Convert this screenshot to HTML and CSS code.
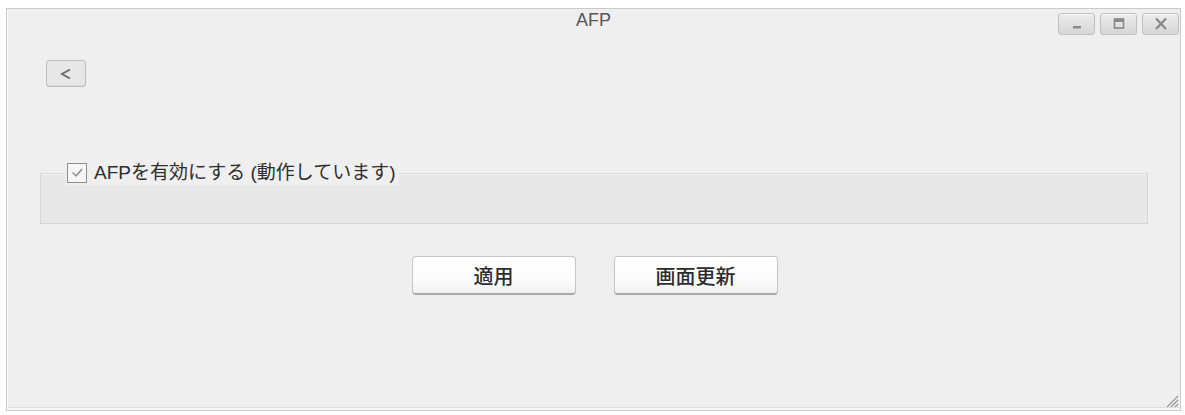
FILE: index.html
```html
<!DOCTYPE html>
<html lang="ja">
<head>
<meta charset="utf-8">
<title>AFP</title>
<link rel="stylesheet" href="styles.css">
</head>
<body>
<div class="window">
  <div class="titlebar">
    <div class="title">AFP</div>
    <div class="controls">
      <span class="ctl"><svg class="ico" width="16" height="14" viewBox="0 0 16 14"><rect x="4" y="9" width="8" height="2.5" fill="#888"/></svg></span>
      <span class="ctl"><svg class="ico" width="16" height="14" viewBox="0 0 16 14"><rect x="3.5" y="2" width="9" height="9" fill="none" stroke="#888" stroke-width="1.6"/><rect x="3.5" y="2" width="9" height="3" fill="#888"/></svg></span>
      <span class="ctl"><svg class="ico" width="16" height="14" viewBox="0 0 16 14"><path d="M3 1.5 L13 12 M13 1.5 L3 12" stroke="#888" stroke-width="2.2"/></svg></span>
    </div>
  </div>
  <div class="toolbar">
    <button class="back"><svg class="ico" width="16" height="16" viewBox="0 0 16 16"><path d="M12 3.5 L4 8 L12 12.5" fill="none" stroke="#6e6e6e" stroke-width="2"/></svg></button>
  </div>
  <fieldset class="group">
    <legend class="legend">
      <span class="check"><svg class="ico" width="16" height="16" viewBox="0 0 16 16"><path d="M3.5 7.5 L7 11 L13 4" fill="none" stroke="#8c8c8c" stroke-width="1.5"/></svg></span>
      <span class="label">AFPを有効にする (動作しています)</span>
    </legend>
  </fieldset>
  <div class="actions">
    <button class="btn">適用</button>
    <button class="btn">画面更新</button>
  </div>
  <div class="grip"><svg class="ico" width="16" height="16" viewBox="0 0 16 16"><path d="M15 4 L4 15 M15 8 L8 15 M15 12 L12 15" stroke="#9a9a9a" stroke-width="1.3"/></svg></div>
</div>
</body>
</html>
```

FILE: styles.css
```css
html, body {
  margin: 0;
  padding: 0;
  background: #ffffff;
}

body {
  padding: 8px 4px 4px 6px;
  font-family: "Liberation Sans", "Noto Sans CJK JP", sans-serif;
  color: #333;
}

.ico {
  display: block;
  flex-shrink: 0;
}

.window {
  position: relative;
  height: 401px;
  border: 1px solid #c9c9c9;
  box-shadow: inset 1px 0 0 #fafafa, inset 0 -2px 0 #fafafa, inset 0 -3px 0 #e0e0e0;
  background: #efefef;
  display: flex;
  flex-direction: column;
}

.titlebar {
  display: grid;
  grid-template-columns: 1fr auto 1fr;
  align-items: start;
  height: 31px;
}

.title {
  grid-column: 2;
  font-size: 18px;
  color: #555;
  padding-top: 1px;
  line-height: 21px;
}

.controls {
  grid-column: 3;
  justify-self: end;
  display: flex;
  gap: 5px;
  padding-top: 4px;
  padding-right: 1px;
}

.ctl {
  width: 35px;
  height: 20px;
  border: 1px solid #c0c0c0;
  border-radius: 3px;
  background: linear-gradient(#ececec, #d6d6d6);
  box-shadow: inset 0 1px 0 #f8f8f8;
  display: flex;
  align-items: center;
  justify-content: center;
}

.toolbar {
  padding: 20px 0 0 39px;
  display: flex;
}

.back {
  width: 40px;
  height: 27px;
  padding: 0;
  border: 1px solid #bdbdbd;
  border-radius: 3px;
  background: #e7e7e7;
  box-shadow: inset 0 -1px 0 #d6d6d6;
  display: flex;
  align-items: center;
  justify-content: center;
}

.group {
  margin: 74px 32px 0 33px;
  padding: 0;
  height: 61px;
  border: 1px solid #d6d6d6;
  border-top-color: #dcdcdc;
  background: #e8e8e8;
  box-shadow: inset 0 1px 0 #f2f2f2;
}

.legend {
  margin-left: 25px;
  padding: 0 3px 0 1px;
  display: flex;
  align-items: center;
  gap: 7px;
  height: 24px;
  background: #efefef;
}

.check {
  width: 20px;
  height: 20px;
  box-sizing: border-box;
  border: 1.5px solid #8e8e8e;
  background: #f6f6f6;
  display: flex;
  align-items: center;
  justify-content: center;
}

.label {
  font-size: 19px;
  line-height: 24px;
  color: #2e2e2e;
}

.actions {
  margin-top: 32px;
  display: flex;
  justify-content: center;
  gap: 38px;
  padding-left: 2px;
}

.btn {
  width: 164px;
  height: 39px;
  padding: 0;
  border: 1px solid #c6c6c6;
  border-bottom: 2px solid #a9a9a9;
  border-radius: 4px;
  background: linear-gradient(#ffffff, #fbfbfb 70%, #f0f0f0);
  font-family: "Noto Sans CJK JP", "Liberation Sans", sans-serif;
  font-size: 20px;
  font-weight: 500;
  color: #2c2c2c;
}

.grip {
  position: absolute;
  right: 1px;
  bottom: 2px;
  width: 16px;
  height: 16px;
}
```
